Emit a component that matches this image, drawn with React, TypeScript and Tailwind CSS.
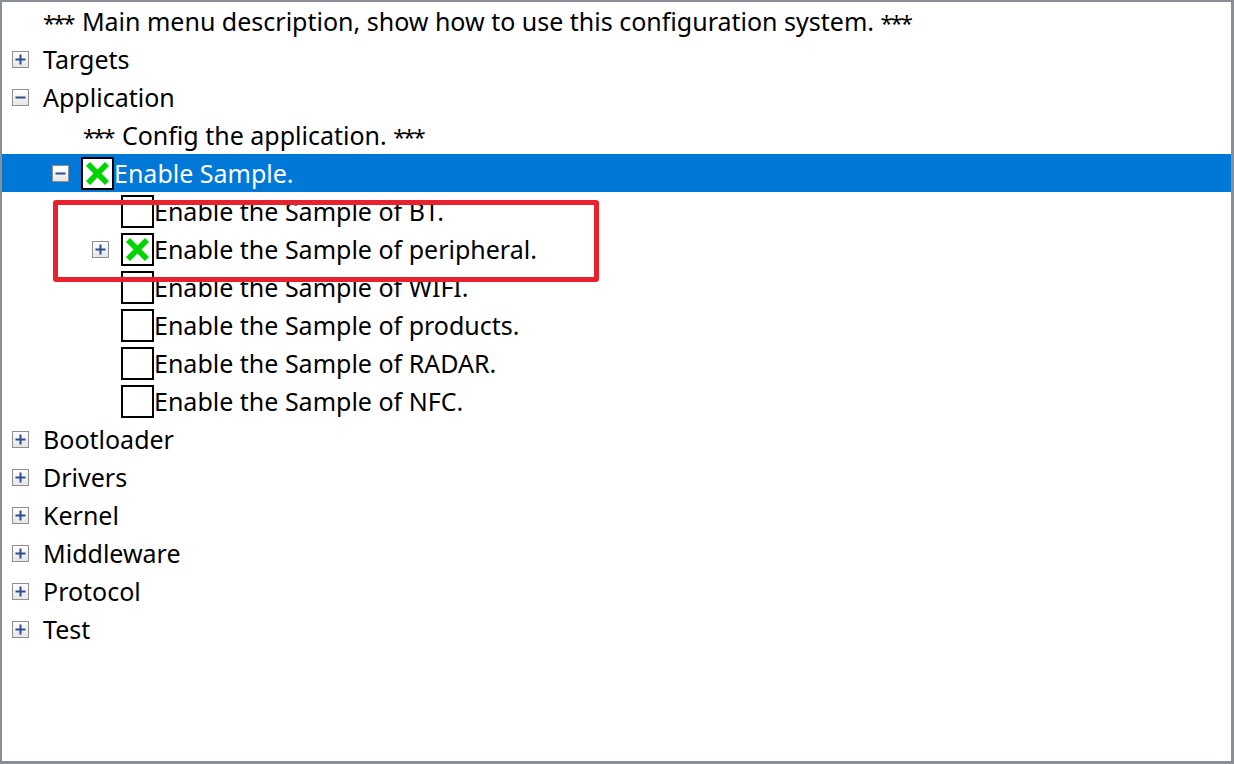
import React from 'react'

type Node = {
  label: string
  level: number
  expander?: 'plus' | 'minus'
  check?: 'on' | 'off'
  selected?: boolean
}

const ROWS: Node[] = [
  { label: '*** Main menu description, show how to use this configuration system. ***', level: 0 },
  { label: 'Targets', level: 0, expander: 'plus' },
  { label: 'Application', level: 0, expander: 'minus' },
  { label: '*** Config the application. ***', level: 1 },
  { label: 'Enable Sample.', level: 1, expander: 'minus', check: 'on', selected: true },
  { label: 'Enable the Sample of BT.', level: 2, check: 'off' },
  { label: 'Enable the Sample of peripheral.', level: 2, expander: 'plus', check: 'on' },
  { label: 'Enable the Sample of WIFI.', level: 2, check: 'off' },
  { label: 'Enable the Sample of products.', level: 2, check: 'off' },
  { label: 'Enable the Sample of RADAR.', level: 2, check: 'off' },
  { label: 'Enable the Sample of NFC.', level: 2, check: 'off' },
  { label: 'Bootloader', level: 0, expander: 'plus' },
  { label: 'Drivers', level: 0, expander: 'plus' },
  { label: 'Kernel', level: 0, expander: 'plus' },
  { label: 'Middleware', level: 0, expander: 'plus' },
  { label: 'Protocol', level: 0, expander: 'plus' },
  { label: 'Test', level: 0, expander: 'plus' },
]

const INDENT = ['pl-[10px]', 'pl-[50px]', 'pl-[90px]']

function Expander({ kind }: { kind?: 'plus' | 'minus' }) {
  if (!kind) return <span className="w-[17px] h-[17px] shrink-0" />
  return (
    <span className="w-[17px] h-[17px] shrink-0 border border-[#8f8f8f] bg-gradient-to-b from-white to-[#e6e6e6] flex items-center justify-center">
      <svg width="11" height="11" viewBox="0 0 11 11">
        <rect x="0.5" y="4.5" width="10" height="2" fill="#2d4d8c" />
        {kind === 'plus' && <rect x="4.5" y="0.5" width="2" height="10" fill="#2d4d8c" />}
      </svg>
    </span>
  )
}

function CheckBox({ on }: { on: boolean }) {
  return (
    <span className="w-[33px] h-[33px] shrink-0 border-2 border-black bg-white flex items-center justify-center">
      {on && (
        <svg width="25" height="25" viewBox="0 0 25 25">
          <path
            d="M5 1 L12.5 8.5 L20 1 L24 5 L16.5 12.5 L24 20 L20 24 L12.5 16.5 L5 24 L1 20 L8.5 12.5 L1 5 Z"
            fill="#00d400"
          />
        </svg>
      )}
    </span>
  )
}

// asterisks in the original font are narrower, squeeze them a bit
function Label({ text }: { text: string }) {
  const parts = text.split('***')
  return (
    <>
      {parts.map((p, i) => (
        <React.Fragment key={i}>
          {i > 0 && <span className="tracking-[-2px] text-[22px] mr-[2px]">***</span>}
          {p}
        </React.Fragment>
      ))}
    </>
  )
}

function Row({ node }: { node: Node }) {
  return (
    <div
      className={`h-[38px] flex items-center ${INDENT[node.level]} ${
        node.selected ? 'bg-[#0078d7] text-white' : 'text-black'
      }`}
    >
      <Expander kind={node.expander} />
      <span className="w-[12px] shrink-0" />
      {node.check && <CheckBox on={node.check === 'on'} />}
      <span className={`whitespace-nowrap ${node.check ? '' : 'ml-[2px]'}`}>
        <Label text={node.label} />
      </span>
    </div>
  )
}

export default function App() {
  return (
    <div
      className="relative w-[1234px] h-[764px] bg-white border-t-2 border-l-2 border-r-[3px] border-b-[3px] border-[#8a8f97] overflow-hidden text-[25px] leading-none"
      style={{ fontFamily: '"Noto Sans", "Open Sans", sans-serif' }}
    >
      {ROWS.map((r, i) => (
        <Row key={i} node={r} />
      ))}

      {/* annotation box */}
      <div className="absolute left-[51px] top-[198px] w-[546px] h-[82px] border-[5px] border-[#e8222d] rounded-[3px]" />
    </div>
  )
}
